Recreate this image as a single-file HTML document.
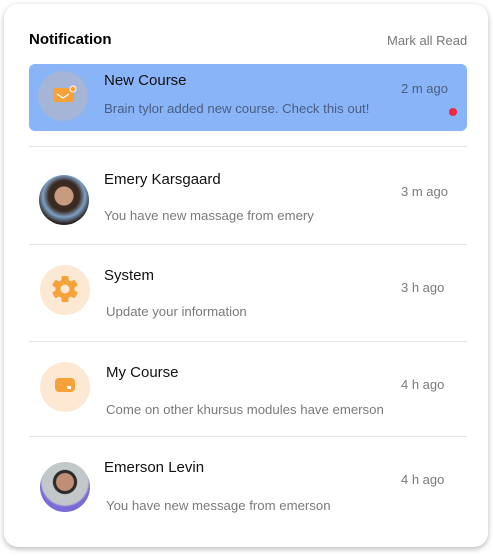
<!DOCTYPE html>
<html><head><style>
body{margin:0;width:493px;height:556px;background:#fff;font-family:"Liberation Sans",sans-serif;position:relative;overflow:hidden}
.card{position:absolute;left:4px;top:4px;width:484px;height:543px;background:#fff;border-radius:14px;box-shadow:0 2px 6px rgba(0,0,0,.28)}
.a{position:absolute;white-space:nowrap}
.t{font-size:15px;color:#111}
.s{font-size:13.2px;color:#7a7a7a}
.tm{font-size:13px;color:#7a7a7a}
.hr{position:absolute;left:29px;width:438px;height:1px;background:#e4e4e4}
.c{position:absolute;width:50px;height:50px;border-radius:50%}
</style></head><body>
<div class="card"></div>
<div class="a" style="left:29px;top:31px;font-size:15px;font-weight:bold;color:#000">Notification</div>
<div class="a" style="left:387px;top:33px;font-size:13px;color:#777">Mark all Read</div>

<div style="position:absolute;left:29px;top:64px;width:438px;height:67px;background:#89b4f8;border-radius:6px"></div>
<div class="c" style="left:38px;top:71px;background:#a4b5d8"></div>
<svg style="position:absolute;left:52px;top:84px" width="26" height="22"><rect x="1" y="4" width="21" height="14" rx="2" fill="#f6a23a"/><path d="M5 10 l6 4 l6 -4" stroke="#fff" stroke-width="1.2" fill="none"/><circle cx="21" cy="5" r="3" fill="#f6a23a" stroke="#fff" stroke-width="1"/></svg>
<div class="a t" style="left:104px;top:72px">New Course</div>
<div class="a s" style="left:104px;top:101px;color:#4a5e80">Brain tylor added new course. Check this out!</div>
<div class="a tm" style="left:401px;top:81px;color:#4a5e80">2 m ago</div>
<div style="position:absolute;left:449px;top:108px;width:8px;height:8px;border-radius:50%;background:#f3263b"></div>
<div class="hr" style="top:146px"></div>

<div class="c" style="left:39px;top:175px;background:radial-gradient(circle at 50% 42%,#c89a7f 0 24%,#3b2a22 26% 40%,#7da0c4 55%,#2b2320 72%)"></div>
<div class="a t" style="left:104px;top:171px">Emery Karsgaard</div>
<div class="a s" style="left:104px;top:208px">You have new massage from emery</div>
<div class="a tm" style="left:401px;top:184px">3 m ago</div>
<div class="hr" style="top:244px"></div>

<div class="c" style="left:40px;top:265px;background:#fde8d4"></div>
<svg style="position:absolute;left:50px;top:274px" width="30" height="30" viewBox="0 0 30 30"><g fill="#f6a23a" transform="translate(15 15)"><rect x="-3.5" y="-13" width="7" height="26" rx="1.5"/><rect x="-3.5" y="-13" width="7" height="26" rx="1.5" transform="rotate(60)"/><rect x="-3.5" y="-13" width="7" height="26" rx="1.5" transform="rotate(120)"/><circle r="9.5"/></g><circle cx="15" cy="15" r="4.5" fill="#fde8d4"/></svg>
<div class="a t" style="left:104px;top:267px">System</div>
<div class="a s" style="left:106px;top:304px">Update your information</div>
<div class="a tm" style="left:401px;top:280px">3 h ago</div>
<div class="hr" style="top:341px"></div>

<div class="c" style="left:40px;top:362px;background:#fde8d4"></div>
<svg style="position:absolute;left:54px;top:376px" width="22" height="18"><rect x="1" y="2" width="20" height="14" rx="4" fill="#f6a23a"/><rect x="13" y="10" width="4" height="3" fill="#fff"/></svg>
<div class="a t" style="left:106px;top:364px">My Course</div>
<div class="a s" style="left:106px;top:402px">Come on other khursus modules have emerson</div>
<div class="a tm" style="left:401px;top:377px">4 h ago</div>
<div class="hr" style="top:436px"></div>

<div class="c" style="left:40px;top:462px;background:radial-gradient(circle at 50% 40%,#c08e75 0 22%,#2e2a28 24% 30%,#c2c7c9 32% 58%,#7a6ad8 64%)"></div>
<div class="a t" style="left:104px;top:459px">Emerson Levin</div>
<div class="a s" style="left:106px;top:498px">You have new message from emerson</div>
<div class="a tm" style="left:401px;top:472px">4 h ago</div>
</body></html>
